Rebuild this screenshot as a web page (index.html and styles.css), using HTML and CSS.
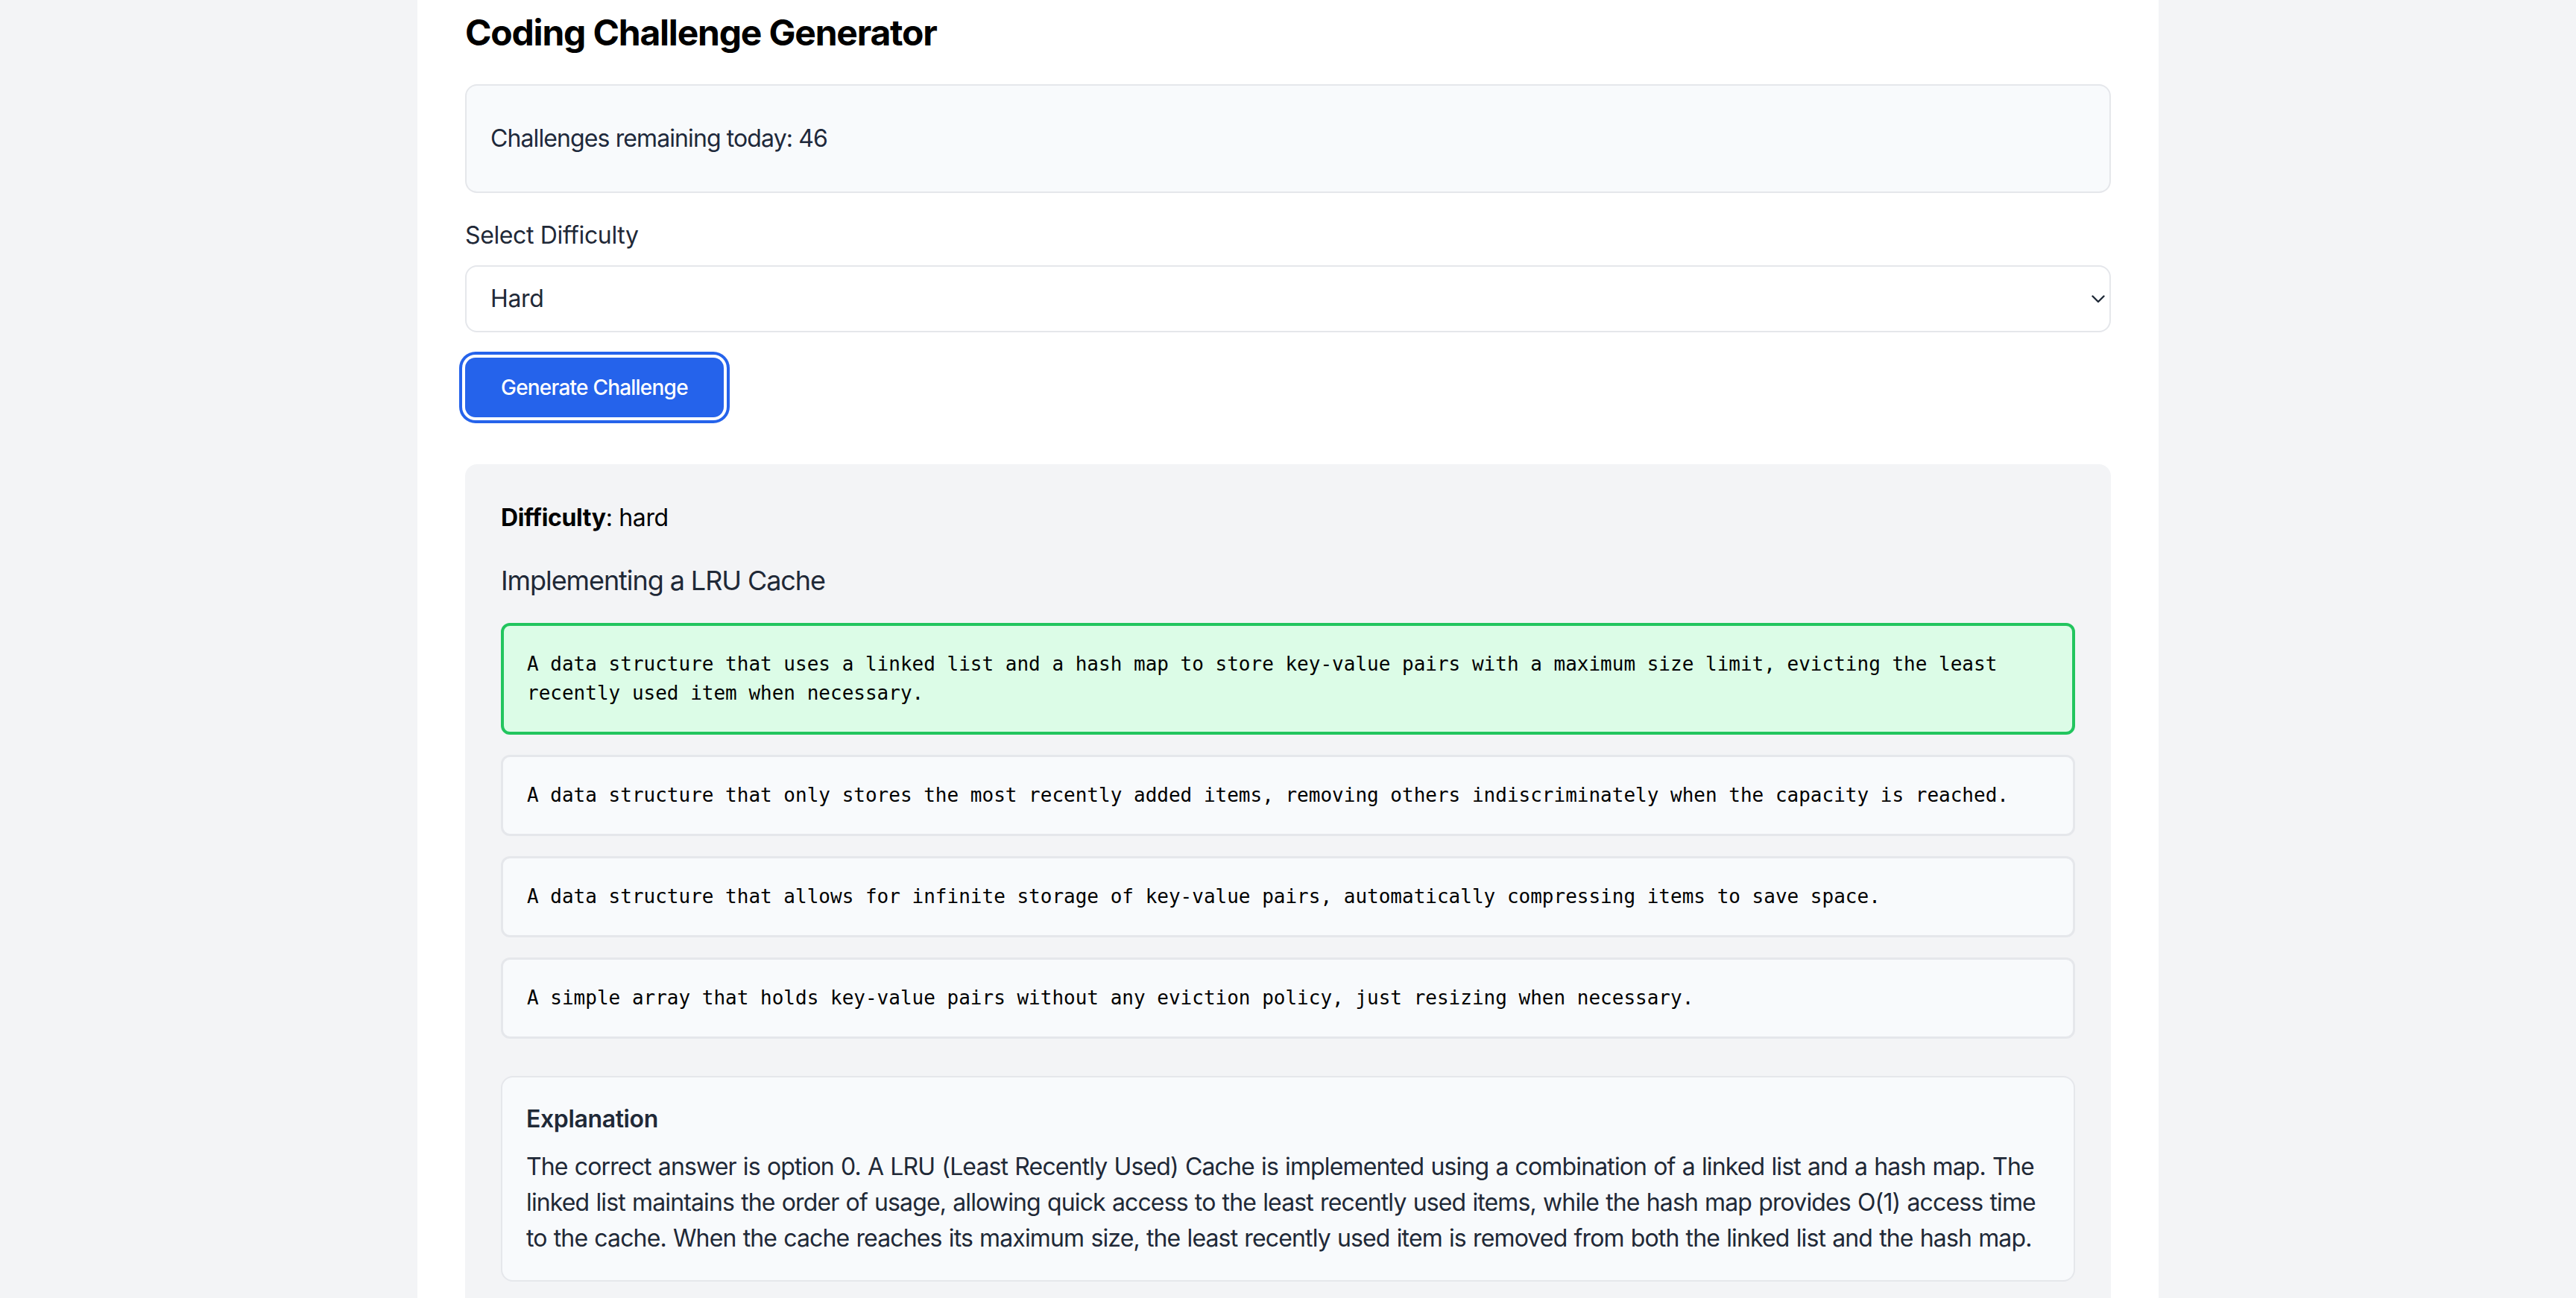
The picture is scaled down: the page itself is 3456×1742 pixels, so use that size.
FILE: index.html
```html
<!DOCTYPE html>
<html lang="en">
<head>
<meta charset="utf-8">
<title>Coding Challenge Generator</title>
<link rel="stylesheet" href="styles.css">
</head>
<body>
<main class="container">
  <h1 class="title">Coding Challenge Generator</h1>
  <div class="quota">
    <p>Challenges remaining today: 46</p>
  </div>
  <label class="label" for="difficulty">Select Difficulty</label>
  <div class="select-wrap">
    <select id="difficulty" class="select">
      <option>Easy</option>
      <option>Medium</option>
      <option selected>Hard</option>
    </select>
    <svg class="chevron" width="18" height="11" viewBox="0 0 18 11" aria-hidden="true">
      <path d="M1.5 1.5 L9 9 L16.5 1.5" fill="none" stroke="#1f2937" stroke-width="2.4" stroke-linecap="round" stroke-linejoin="round"/>
    </svg>
  </div>
  <button class="btn" type="button">Generate Challenge</button>

  <section class="card">
    <p class="meta"><strong>Difficulty</strong>: hard</p>
    <h3 class="question">Implementing a LRU Cache</h3>
    <div class="options">
      <div class="option correct">A data structure that uses a linked list and a hash map to store key-value pairs with a maximum size limit, evicting the least recently used item when necessary.</div>
      <div class="option">A data structure that only stores the most recently added items, removing others indiscriminately when the capacity is reached.</div>
      <div class="option">A data structure that allows for infinite storage of key-value pairs, automatically compressing items to save space.</div>
      <div class="option">A simple array that holds key-value pairs without any eviction policy, just resizing when necessary.</div>
    </div>
    <div class="explanation">
      <h4 class="exp-title">Explanation</h4>
      <p class="exp-text">The correct answer is option 0. A LRU (Least Recently Used) Cache is implemented using a combination of a linked list and a hash map. The linked list maintains the order of usage, allowing quick access to the least recently used items, while the hash map provides O(1) access time to the cache. When the cache reaches its maximum size, the least recently used item is removed from both the linked list and the hash map.</p>
    </div>
  </section>
</main>
</body>
</html>
```

FILE: styles.css
```css
* {
  box-sizing: border-box;
}

html, body {
  margin: 0;
  padding: 0;
}

body {
  background: #f3f4f6;
  font-family: Inter, "Noto Sans", "Liberation Sans", sans-serif;
  letter-spacing: -0.023em;
  color: #1f2937;
  min-height: 1742px;
}

.container {
  width: 2336px;
  margin: 0 auto;
  background: #ffffff;
  padding: 12px 64px 0 64px;
  min-height: 1742px;
}

.title {
  margin: 0 0 37px 0;
  font-size: 48px;
  line-height: 64px;
  font-weight: 700;
  letter-spacing: -0.025em;
  color: #000000;
}

.quota {
  background: #f8fafc;
  border: 2px solid #e5e7eb;
  border-radius: 16px;
  padding: 47px 32px;
}

.quota p {
  margin: 0;
  font-size: 32px;
  line-height: 48px;
  letter-spacing: -0.028em;
  color: #1e293b;
}

.label {
  display: block;
  margin-top: 33px;
  font-size: 32px;
  line-height: 48px;
  color: #1f2937;
}

.select-wrap {
  position: relative;
  margin-top: 16px;
}

.select {
  display: block;
  width: 100%;
  appearance: none;
  -webkit-appearance: none;
  background: #ffffff;
  border: 2px solid #e5e7eb;
  border-radius: 16px;
  padding: 19px 32px;
  font-family: inherit;
  letter-spacing: inherit;
  font-size: 32px;
  line-height: 48px;
  height: 90px;
  color: #1f2937;
  outline: none;
}

.chevron {
  position: absolute;
  right: 8px;
  top: 40px;
}

.btn {
  display: block;
  margin-top: 34px;
  background: #2563eb;
  color: #ffffff;
  border: none;
  border-radius: 14px;
  padding: 20px 48px;
  font-family: inherit;
  letter-spacing: -0.028em;
  font-size: 28px;
  line-height: 40px;
  font-weight: 500;
  box-shadow: 0 0 0 4px #ffffff, 0 0 0 8px #2563eb;
}

.card {
  margin-top: 63px;
  background: #f3f4f6;
  border-radius: 16px;
  padding: 48px 48px 48px 48px;
}

.meta {
  margin: 0 0 32px 0;
  font-size: 32px;
  line-height: 48px;
  color: #000000;
}

.meta strong {
  font-weight: 700;
}

.question {
  margin: 0 0 29px 0;
  font-size: 36px;
  line-height: 56px;
  font-weight: 400;
  letter-spacing: -0.03em;
  color: #1f2937;
}

.options {
  display: flex;
  flex-direction: column;
  gap: 27px;
}

.option {
  background: #f8fafc;
  border: 3px solid #e5e7eb;
  border-radius: 12px;
  padding: 32px 32px;
  font-family: "DejaVu Sans Mono", "Liberation Mono", monospace;
  letter-spacing: 0;
  font-size: 26px;
  line-height: 39px;
  color: #000000;
}

.option.correct {
  background: #dcfce7;
  border: 4px solid #22c55e;
  padding: 32px 31px;
}

.explanation {
  margin-top: 50px;
  background: #f8fafc;
  border: 2px solid #e5e7eb;
  border-radius: 16px;
  padding: 32px 32px;
}

.exp-title {
  margin: 0 0 16px 0;
  font-size: 32px;
  line-height: 48px;
  font-weight: 600;
  color: #1f2937;
}

.exp-text {
  margin: 0;
  font-size: 32px;
  line-height: 48px;
  letter-spacing: -0.027em;
  word-spacing: 1px;
  color: #1f2937;
}
```
